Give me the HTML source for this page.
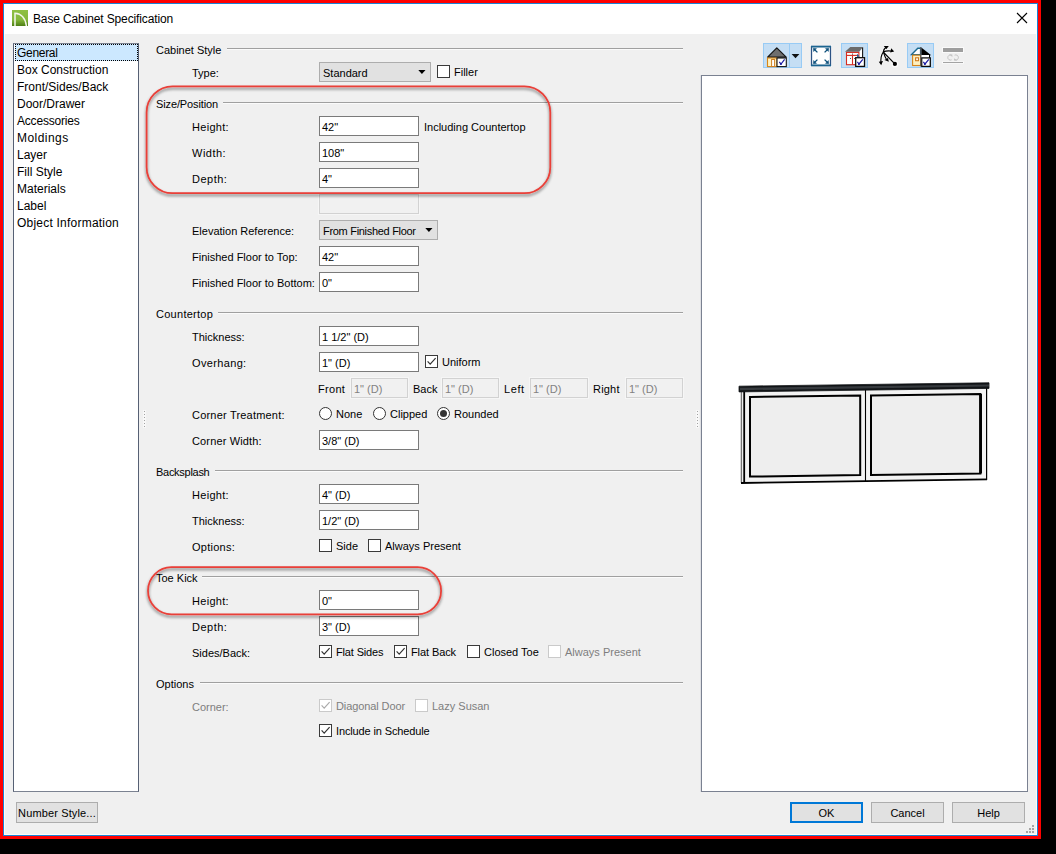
<!DOCTYPE html>
<html lang="en">
<head>
<meta charset="utf-8">
<title>Base Cabinet Specification</title>
<style>
html,body{margin:0;padding:0;}
body{width:1056px;height:854px;background:#000;overflow:hidden;position:relative;
  font-family:"Liberation Sans",sans-serif;font-size:11px;color:#000;}
#red{position:absolute;left:0;top:0;width:1041px;height:839px;background:#fe0000;}
#blue{position:absolute;left:3px;top:3px;width:1035px;height:833px;background:#1883d7;}
#win{position:absolute;left:4px;top:4px;width:1033px;height:831px;background:#fffdf8;}
#title{position:absolute;left:4px;top:4px;width:1033px;height:30px;background:#fff;}
#client{position:absolute;left:5px;top:34px;width:1031px;height:800px;background:#f0f0f0;}
.abs{position:absolute;}
.t{position:absolute;white-space:nowrap;line-height:13px;height:13px;font-size:11px;}
.dis{color:#7e7e7e;}
.ui{font-size:12px;line-height:15px;height:15px;}
.inp{position:absolute;box-sizing:border-box;width:100px;height:20px;border:1px solid #7a7a7a;background:#fff;
  padding:1px 0 0 2px;line-height:19px;font-size:11px;white-space:nowrap;}
.inp.d{border-color:#d2d2d2;background:#f1f1f1;color:#828282;box-shadow:0 0 0 1px #f6f6f6;}
.sel{position:absolute;box-sizing:border-box;height:20px;border:1px solid #adadad;background:#e1e1e1;
  padding:1px 0 0 3px;line-height:19px;font-size:11px;white-space:nowrap;}
.sel svg{position:absolute;right:4px;top:7px;}
.hr{position:absolute;height:1px;background:#a0a0a0;box-shadow:0 1px 0 #fbfbfb;}
.cb{position:absolute;box-sizing:border-box;width:13px;height:13px;border:1px solid #3a3a3a;background:#fff;}
.cb.d{border-color:#cacaca;background:#fff;}
.cb svg{position:absolute;left:0;top:0;}
.rb{position:absolute;box-sizing:border-box;width:13px;height:13px;border:1px solid #333;border-radius:50%;background:#fff;}
.rb.on:after{content:"";position:absolute;left:2px;top:2px;width:7px;height:7px;border-radius:50%;background:#333;}
.btn{position:absolute;box-sizing:border-box;height:21px;border:1px solid #adadad;background:#e1e1e1;text-align:center;
  font-size:11px;line-height:21px;white-space:nowrap;}
.li{position:absolute;left:3px;white-space:nowrap;font-size:12px;line-height:17px;height:17px;}
.callout{position:absolute;box-sizing:border-box;border:2px solid #e8433d;box-shadow:1px 2px 3px rgba(0,0,0,.45);}
</style>
</head>
<body>
<div id="red"></div>
<div id="blue"></div>
<div id="win"></div>
<div id="title">
  <svg class="abs" style="left:8px;top:6px" width="16" height="16" viewBox="0 0 16 16">
    <defs><linearGradient id="g1" x1="0" y1="0" x2="0" y2="1"><stop offset="0" stop-color="#8fc043"/><stop offset=".6" stop-color="#86b83c"/><stop offset="1" stop-color="#4d7f14"/></linearGradient></defs>
    <rect width="16" height="16" fill="url(#g1)"/>
    <path d="M3 16V3.2C9 3.6 13.6 8 14.4 16" fill="none" stroke="#f3f6ea" stroke-width="1.5"/>
  </svg>
  <div class="t ui" style="left:29px;top:8px;letter-spacing:-0.13px">Base Cabinet Specification</div>
  <svg class="abs" style="left:1012px;top:8px" width="12" height="12" viewBox="0 0 12 12"><path d="M1 1L11 11M11 1L1 11" stroke="#000" stroke-width="1.1" fill="none"/></svg>
</div>
<div id="client"></div>

<!-- LIST -->
<div id="list" class="abs" style="left:13px;top:43px;width:126px;height:749px;box-sizing:border-box;border:1px solid #7b8291;border-left-color:#566074;border-right-color:#566074;background:#fff;">
  <div class="abs" style="left:1px;top:0px;width:123px;height:17px;background:#cce8ff;box-sizing:border-box;border:1px dotted #000;"></div>
  <div class="li" style="top:1px;letter-spacing:-0.3px">General</div>
  <div class="li" style="top:18px">Box Construction</div>
  <div class="li" style="top:35px">Front/Sides/Back</div>
  <div class="li" style="top:52px">Door/Drawer</div>
  <div class="li" style="top:69px;letter-spacing:-0.2px">Accessories</div>
  <div class="li" style="top:86px;letter-spacing:0.45px">Moldings</div>
  <div class="li" style="top:103px">Layer</div>
  <div class="li" style="top:120px">Fill Style</div>
  <div class="li" style="top:137px">Materials</div>
  <div class="li" style="top:154px">Label</div>
  <div class="li" style="top:171px;letter-spacing:0.22px">Object Information</div>
</div>
<div class="btn" style="left:16px;top:802px;width:82px;letter-spacing:.13px">Number Style...</div>

<!-- FORM -->
<div id="form">
<div class="t" style="left:156px;top:44px">Cabinet Style</div>
<div class="hr" style="left:227px;top:48px;width:456px"></div>
<div class="t " style="left:192px;top:67px">Type:</div>
<div class="sel" style="left:319px;top:62px;width:112px">Standard<svg width="8" height="5" viewBox="0 0 8 5"><polygon points="0.3,0 7.5,0 3.9,4.1" fill="#000"/></svg></div>
<div class="cb" style="left:437px;top:65px"></div>
<div class="t" style="left:454px;top:66px">Filler</div>
<div class="t" style="left:156px;top:98px;letter-spacing:-0.12px">Size/Position</div>
<div class="hr" style="left:223px;top:102px;width:460px"></div>
<div class="t " style="left:192px;top:121px;letter-spacing:0.3px">Height:</div>
<div class="inp" style="left:319px;top:116px;width:100px">42"</div>
<div class="t" style="left:424px;top:121px">Including Countertop</div>
<div class="t " style="left:192px;top:147px;letter-spacing:0.5px">Width:</div>
<div class="inp" style="left:319px;top:142px;width:100px">108"</div>
<div class="t " style="left:192px;top:173px;letter-spacing:0.5px">Depth:</div>
<div class="inp" style="left:319px;top:168px;width:100px">4"</div>
<div class="inp d" style="left:319px;top:194px;width:100px"></div>
<div class="t " style="left:192px;top:225px">Elevation Reference:</div>
<div class="sel" style="left:319px;top:220px;width:119px"><span style="letter-spacing:-0.3px">From Finished Floor</span><svg width="8" height="5" viewBox="0 0 8 5"><polygon points="0.3,0 7.5,0 3.9,4.1" fill="#000"/></svg></div>
<div class="t " style="left:192px;top:251px">Finished Floor to Top:</div>
<div class="inp" style="left:319px;top:246px;width:100px">42"</div>
<div class="t " style="left:192px;top:277px">Finished Floor to Bottom:</div>
<div class="inp" style="left:319px;top:272px;width:100px">0"</div>
<div class="t" style="left:156px;top:308px;letter-spacing:0.27px">Countertop</div>
<div class="hr" style="left:218px;top:312px;width:465px"></div>
<div class="t " style="left:192px;top:331px">Thickness:</div>
<div class="inp" style="left:319px;top:326px;width:100px">1 1/2" (D)</div>
<div class="t " style="left:192px;top:357px;letter-spacing:0.35px">Overhang:</div>
<div class="inp" style="left:319px;top:352px;width:100px">1" (D)</div>
<div class="cb" style="left:425px;top:355px"><svg width="11" height="11" viewBox="0 0 11 11"><path d="M1.6 5.4L4.2 8.2L9.6 2.2" fill="none" stroke="#333333" stroke-width="1.2"/></svg></div>
<div class="t" style="left:442px;top:356px">Uniform</div>
<div class="t " style="left:318px;top:383px;letter-spacing:0.3px">Front</div>
<div class="inp d" style="left:351px;top:378px;width:57px">1" (D)</div>
<div class="t " style="left:413px;top:383px">Back</div>
<div class="inp d" style="left:442px;top:378px;width:57px">1" (D)</div>
<div class="t " style="left:504px;top:383px;letter-spacing:0.6px">Left</div>
<div class="inp d" style="left:530px;top:378px;width:58px">1" (D)</div>
<div class="t " style="left:593px;top:383px;letter-spacing:0.2px">Right</div>
<div class="inp d" style="left:626px;top:378px;width:57px">1" (D)</div>
<div class="t " style="left:192px;top:409px;letter-spacing:0.2px">Corner Treatment:</div>
<div class="rb" style="left:319px;top:407px"></div>
<div class="t" style="left:336px;top:408px">None</div>
<div class="rb" style="left:373px;top:407px"></div>
<div class="t" style="left:390px;top:408px">Clipped</div>
<div class="rb on" style="left:437px;top:407px"></div>
<div class="t" style="left:454px;top:408px">Rounded</div>
<div class="t " style="left:192px;top:435px;letter-spacing:0.15px">Corner Width:</div>
<div class="inp" style="left:319px;top:430px;width:100px">3/8" (D)</div>
<div class="t" style="left:156px;top:466px;letter-spacing:-0.28px">Backsplash</div>
<div class="hr" style="left:215px;top:470px;width:468px"></div>
<div class="t " style="left:192px;top:489px;letter-spacing:0.3px">Height:</div>
<div class="inp" style="left:319px;top:484px;width:100px">4" (D)</div>
<div class="t " style="left:192px;top:515px">Thickness:</div>
<div class="inp" style="left:319px;top:510px;width:100px">1/2" (D)</div>
<div class="t " style="left:192px;top:541px;letter-spacing:0.25px">Options:</div>
<div class="cb" style="left:319px;top:539px"></div>
<div class="t" style="left:336px;top:540px">Side</div>
<div class="cb" style="left:368px;top:539px"></div>
<div class="t" style="left:385px;top:540px">Always Present</div>
<div class="t" style="left:156px;top:572px">Toe Kick</div>
<div class="hr" style="left:202px;top:576px;width:481px"></div>
<div class="t " style="left:192px;top:595px;letter-spacing:0.3px">Height:</div>
<div class="inp" style="left:319px;top:590px;width:100px">0"</div>
<div class="t " style="left:192px;top:621px;letter-spacing:0.5px">Depth:</div>
<div class="inp" style="left:319px;top:616px;width:100px">3" (D)</div>
<div class="t " style="left:192px;top:647px">Sides/Back:</div>
<div class="cb" style="left:319px;top:645px"><svg width="11" height="11" viewBox="0 0 11 11"><path d="M1.6 5.4L4.2 8.2L9.6 2.2" fill="none" stroke="#333333" stroke-width="1.2"/></svg></div>
<div class="t" style="left:336px;top:646px;letter-spacing:-0.15px">Flat Sides</div>
<div class="cb" style="left:394px;top:645px"><svg width="11" height="11" viewBox="0 0 11 11"><path d="M1.6 5.4L4.2 8.2L9.6 2.2" fill="none" stroke="#333333" stroke-width="1.2"/></svg></div>
<div class="t" style="left:411px;top:646px;letter-spacing:-0.1px">Flat Back</div>
<div class="cb" style="left:467px;top:645px"></div>
<div class="t" style="left:484px;top:646px">Closed Toe</div>
<div class="cb d" style="left:548px;top:645px"></div>
<div class="t dis" style="left:565px;top:646px">Always Present</div>
<div class="t" style="left:156px;top:678px">Options</div>
<div class="hr" style="left:200px;top:682px;width:483px"></div>
<div class="t dis" style="left:192px;top:701px">Corner:</div>
<div class="cb d" style="left:319px;top:699px"><svg width="11" height="11" viewBox="0 0 11 11"><path d="M1.6 5.4L4.2 8.2L9.6 2.2" fill="none" stroke="#ababab" stroke-width="1.2"/></svg></div>
<div class="t dis" style="left:336px;top:700px;letter-spacing:-0.1px">Diagonal Door</div>
<div class="cb d" style="left:415px;top:699px"></div>
<div class="t dis" style="left:432px;top:700px">Lazy Susan</div>
<div class="cb" style="left:319px;top:724px"><svg width="11" height="11" viewBox="0 0 11 11"><path d="M1.6 5.4L4.2 8.2L9.6 2.2" fill="none" stroke="#333333" stroke-width="1.2"/></svg></div>
<div class="t" style="left:336px;top:725px;letter-spacing:-0.13px">Include in Schedule</div>
</div>

<!-- PREVIEW -->
<div id="preview" class="abs" style="left:701px;top:75px;width:327px;height:717px;box-sizing:border-box;border:1px solid #7a8191;background:#fff;box-shadow:-1px 0 0 #dfe0e4;"></div>

<!-- BUTTONS -->
<div class="btn" style="left:790px;top:802px;width:73px;border:2px solid #0078d7;line-height:19px;">OK</div>
<div class="btn" style="left:871px;top:802px;width:73px;">Cancel</div>
<div class="btn" style="left:952px;top:802px;width:73px;">Help</div>
<!-- CALLOUTS -->
<svg class="abs" style="left:130px;top:70px;overflow:visible" width="440" height="140" viewBox="130 70 440 140">
  <defs><filter id="sh" x="-10%" y="-20%" width="120%" height="150%"><feGaussianBlur in="SourceAlpha" stdDeviation="1.6"/><feOffset dx="-0.5" dy="2.2"/><feComponentTransfer><feFuncA type="linear" slope="0.55"/></feComponentTransfer><feMerge><feMergeNode/><feMergeNode in="SourceGraphic"/></feMerge></filter></defs>
  <rect x="146.6" y="86.3" width="403.7" height="106.9" rx="26" ry="26" fill="none" stroke="#e93f38" stroke-width="1.75" filter="url(#sh)"/>
</svg>
<svg class="abs" style="left:130px;top:555px;overflow:visible" width="330" height="75" viewBox="130 555 330 75">
  <rect x="148" y="567.2" width="293.1" height="47.1" rx="23.5" ry="23.5" fill="none" stroke="#e93f38" stroke-width="1.75" filter="url(#sh)"/>
</svg>

<!-- TOOLBAR -->
<svg class="abs" style="left:760px;top:40px" width="210" height="32" viewBox="760 40 210 32">
  <!-- button 1: house w/ dropdown -->
  <rect x="763.5" y="43.5" width="38" height="24" fill="#c5def4" stroke="#98cbf5" stroke-width="1"/>
  <line x1="789.5" y1="44" x2="789.5" y2="67" stroke="#98cbf5" stroke-width="1"/>
  <polygon points="776.8,47.8 767.6,57.2 786.2,57.2" fill="#6e6e6e" stroke="#141414" stroke-width="1.2" stroke-linejoin="round"/>
  <rect x="767.5" y="58" width="9.5" height="8.6" fill="#fff2c2" stroke="#d88616" stroke-width="1.1"/>
  <rect x="771.6" y="59.5" width="3" height="7" fill="#fff" stroke="#cf7f22" stroke-width="1"/>
  <rect x="777" y="58" width="9.3" height="8.6" fill="#fff" stroke="#141414" stroke-width="1.1"/>
  <path d="M779.3 61.8L781 64L784.6 59.4" fill="none" stroke="#1c1ca4" stroke-width="1.2"/>
  <circle cx="780.9" cy="64" r="1" fill="#1c1ca4"/>
  <polygon points="791.6,54 799.4,54 795.5,58.2" fill="#111"/>
  <!-- button 2: fullscreen -->
  <rect x="810" y="45" width="22" height="22" fill="#fbfbfb"/>
  <rect x="811.5" y="46.5" width="19" height="19" fill="#fff" stroke="#2d5384" stroke-width="1.3"/>
  <line x1="811" y1="46.6" x2="831" y2="46.6" stroke="#1c6590" stroke-width="1.7"/>
  <line x1="811" y1="65.4" x2="831" y2="65.4" stroke="#1c6590" stroke-width="1.7"/>
  <g fill="#0d507c" stroke="#0d507c" stroke-width="1.3">
    <path d="M814.2 49.2L817.4 52.4" fill="none"/><polygon points="813.2,48.2 816.6,48.6 813.6,51.6" stroke-width=".4"/>
    <path d="M827.8 49.2L824.6 52.4" fill="none"/><polygon points="828.8,48.2 825.4,48.6 828.4,51.6" stroke-width=".4"/>
    <path d="M814.2 62.8L817.4 59.6" fill="none"/><polygon points="813.2,63.8 816.6,63.4 813.6,60.4" stroke-width=".4"/>
    <path d="M827.8 62.8L824.6 59.6" fill="none"/><polygon points="828.8,63.8 825.4,63.4 828.4,60.4" stroke-width=".4"/>
  </g>
  <!-- button 3: cabinet -->
  <rect x="841.5" y="43.5" width="26" height="24" fill="#c5def4" stroke="#98cbf5" stroke-width="1"/>
  <polygon points="859.2,52 862.9,47.4 862.9,58 859.2,58" fill="#fff"/>
  <line x1="862.6" y1="47.2" x2="862.6" y2="58" stroke="#141414" stroke-width="1.1"/>
  <polygon points="845,51.8 850.3,47.1 863,47.1 859.2,51.8" fill="#6b6b6b"/>
  <rect x="846.5" y="52.4" width="12.4" height="12.3" fill="#fff" stroke="#d62c20" stroke-width="1.1"/>
  <line x1="846.5" y1="55.4" x2="858.5" y2="55.4" stroke="#d62c20" stroke-width="1.1"/>
  <line x1="852.5" y1="55.4" x2="852.5" y2="64.7" stroke="#d62c20" stroke-width="1.1"/>
  <rect x="852" y="53.6" width="1" height="1" fill="#333"/><rect x="850" y="58" width="1" height="1" fill="#555"/><rect x="854" y="58" width="1" height="1" fill="#555"/>
  <polygon points="857,53.8 859.6,56.4 857,57" fill="#1b5e96"/>
  <rect x="855.7" y="57.7" width="8.8" height="8.7" fill="#fff" stroke="#0c0c0c" stroke-width="1.3"/>
  <path d="M857.4 61.9L859 64L862.8 59.4" fill="none" stroke="#1c1ca4" stroke-width="1.2"/>
  <circle cx="858.9" cy="64" r="1" fill="#1c1ca4"/>
  <!-- button 4: arrows -->
  <g stroke="#fdfdfd" stroke-width="2.6" fill="none" stroke-linecap="round" opacity=".9">
    <path d="M883.2 52L894.6 63.6"/><path d="M883.3 52C884 49 885 47.5 886.5 46.6"/><path d="M883.3 52C886 50.6 890 50.8 892.5 51.2"/>
    <path d="M883.3 52C881 55 880.6 59 881 63.5"/><path d="M883.6 52.6C884.4 55.4 885.4 57.8 886.8 60"/>
    <circle cx="894.9" cy="63.9" r="2.2"/>
  </g>
  <g stroke="#000" stroke-width="1.15" fill="none">
    <path d="M883.2 52L894.6 63.6"/>
    <path d="M883.3 52C883.8 49.4 885 47.8 886.6 46.8"/>
    <path d="M883.3 52C886 50.6 890 50.8 892.5 51.2"/>
    <path d="M883.3 52C881 55 880.6 59 881 63.5"/>
    <path d="M883.6 52.6C884.4 55.4 885.4 57.8 886.8 60"/>
  </g>
  <g fill="#000">
    <circle cx="894.9" cy="63.9" r="2.1"/>
    <polygon points="883.8,46 888.8,46 886.3,49.3"/>
    <polygon points="891.2,48.2 894.2,51.5 890.2,52.6"/>
    <polygon points="878.8,61.8 883,61 881.2,65.2"/>
    <polygon points="884.4,60 888,58 888.8,61.8"/>
  </g>
  <!-- button 5: split house -->
  <rect x="907.5" y="43.5" width="26" height="24" fill="#c5def4" stroke="#98cbf5" stroke-width="1"/>
  <polygon points="911.6,54.6 917.8,48.3 920.6,48.3 920.6,54.6" fill="#fff" stroke="#1b6a90" stroke-width="1.4"/>
  <rect x="912.6" y="55.2" width="8" height="10.3" fill="#fdf0c0" stroke="#d6851a" stroke-width="1.1"/>
  <rect x="915.6" y="57.8" width="2.9" height="2.9" fill="#fff" stroke="#d07a1c" stroke-width="1.1"/>
  <polygon points="921.3,47.4 931.2,55.2 921.3,55.2" fill="#000"/>
  <rect x="921.3" y="55" width="8.2" height="3" fill="#fff"/>
  <line x1="929.5" y1="54.8" x2="929.5" y2="58" stroke="#000" stroke-width="1"/>
  <rect x="921.7" y="57.9" width="8.6" height="8.5" fill="#fff" stroke="#0c0c0c" stroke-width="1.3"/>
  <line x1="920.8" y1="47" x2="920.8" y2="66.6" stroke="#505054" stroke-width="1.2"/>
  <path d="M923.3 61.9L925 64L928.8 59.4" fill="none" stroke="#1c1ca4" stroke-width="1.2"/>
  <circle cx="924.9" cy="64" r="1" fill="#1c1ca4"/>
  <!-- button 6: disabled -->
  <rect x="942" y="47" width="22" height="6" fill="#fafafa"/>
  <rect x="943" y="48" width="20" height="4" fill="#9e9e9e"/>
  <rect x="942" y="61.4" width="22" height="2.4" fill="#fafafa"/>
  <rect x="943" y="62" width="20" height="1" fill="#a3a3a3"/>
  <g fill="none" stroke="#c4c4c4" stroke-width="1">
    <path d="M951.6 59.8A2.6 2.6 0 1 1 951.6 55.2"/><path d="M954.6 55.2A2.6 2.6 0 1 1 954.6 59.8"/>
  </g>
  <polygon points="949,54.4 952.4,54.4 952.4,57" fill="#c4c4c4"/><polygon points="954,58.2 957.4,60.6 954,60.6" fill="#c4c4c4"/>
</svg>

<!-- CABINET PREVIEW -->
<svg class="abs" style="left:730px;top:370px" width="270" height="130" viewBox="730 370 270 130">
  <!-- body -->
  <polygon points="741,391 987,387.5 987,479.6 741,483.2" fill="#f3f3f3"/>
  <!-- left side face -->
  <polygon points="740.6,391.5 744,391.5 744,483 740.6,482.6" fill="#ededed"/>
  <line x1="741.3" y1="391" x2="741.3" y2="482.8" stroke="#4a4a4a" stroke-width="0.9"/>
  <line x1="744.2" y1="391" x2="744.2" y2="483" stroke="#000" stroke-width="1.8"/>
  <!-- bottom -->
  <line x1="741" y1="483" x2="987" y2="479.4" stroke="#000" stroke-width="1.8"/>
  <!-- right -->
  <line x1="986.6" y1="387" x2="986.6" y2="480" stroke="#000" stroke-width="1.2"/>
  <!-- divider -->
  <line x1="865.5" y1="389" x2="865.5" y2="481.4" stroke="#000" stroke-width="1.1"/>
  <!-- left door panel -->
  <polygon points="750,397 860.2,395.6 860.2,475 750,476.6" fill="#eeeeee" stroke="#000" stroke-width="2"/>
  <!-- right door panel -->
  <polygon points="871,395.4 980.4,394 980.4,473.4 871,475" fill="#eeeeee" stroke="#000" stroke-width="2"/>
  <line x1="980.6" y1="394" x2="980.6" y2="473.4" stroke="#000" stroke-width="2.8"/>
  <!-- countertop -->
  <polygon points="739,386.2 989,382.8 989,388.4 739,391.9" fill="#111417" stroke="#111417" stroke-width="0.8" stroke-linejoin="round"/>
  <polygon points="740,387.8 989,384.4 989,386.6 740,390.2" fill="#363a3e"/>
</svg>

<!-- SPLITTER GRIPS + SIZE GRIP -->
<div class="abs" style="left:143px;top:410px;width:3px;height:3px;background:#f8f8f8"></div><div class="abs" style="left:144px;top:411px;width:1px;height:1px;background:#a2a2a2"></div><div class="abs" style="left:143px;top:413px;width:3px;height:3px;background:#f8f8f8"></div><div class="abs" style="left:144px;top:414px;width:1px;height:1px;background:#a2a2a2"></div><div class="abs" style="left:143px;top:416px;width:3px;height:3px;background:#f8f8f8"></div><div class="abs" style="left:144px;top:417px;width:1px;height:1px;background:#a2a2a2"></div><div class="abs" style="left:143px;top:419px;width:3px;height:3px;background:#f8f8f8"></div><div class="abs" style="left:144px;top:420px;width:1px;height:1px;background:#a2a2a2"></div><div class="abs" style="left:143px;top:422px;width:3px;height:3px;background:#f8f8f8"></div><div class="abs" style="left:144px;top:423px;width:1px;height:1px;background:#a2a2a2"></div><div class="abs" style="left:143px;top:425px;width:3px;height:3px;background:#f8f8f8"></div><div class="abs" style="left:144px;top:426px;width:1px;height:1px;background:#a2a2a2"></div>
<div class="abs" style="left:696px;top:410px;width:3px;height:3px;background:#f8f8f8"></div><div class="abs" style="left:697px;top:411px;width:1px;height:1px;background:#a2a2a2"></div><div class="abs" style="left:696px;top:413px;width:3px;height:3px;background:#f8f8f8"></div><div class="abs" style="left:697px;top:414px;width:1px;height:1px;background:#a2a2a2"></div><div class="abs" style="left:696px;top:416px;width:3px;height:3px;background:#f8f8f8"></div><div class="abs" style="left:697px;top:417px;width:1px;height:1px;background:#a2a2a2"></div><div class="abs" style="left:696px;top:419px;width:3px;height:3px;background:#f8f8f8"></div><div class="abs" style="left:697px;top:420px;width:1px;height:1px;background:#a2a2a2"></div><div class="abs" style="left:696px;top:422px;width:3px;height:3px;background:#f8f8f8"></div><div class="abs" style="left:697px;top:423px;width:1px;height:1px;background:#a2a2a2"></div><div class="abs" style="left:696px;top:425px;width:3px;height:3px;background:#f8f8f8"></div><div class="abs" style="left:697px;top:426px;width:1px;height:1px;background:#a2a2a2"></div>
<svg class="abs" style="left:1025px;top:824px" width="11" height="11" viewBox="1025 824 11 11" shape-rendering="crispEdges">
  <g fill="#a3a3a3"><rect x="1032" y="825" width="2" height="2"/><rect x="1029" y="828" width="2" height="2"/><rect x="1032" y="828" width="2" height="2"/><rect x="1026" y="831" width="2" height="2"/><rect x="1029" y="831" width="2" height="2"/><rect x="1032" y="831" width="2" height="2"/></g>
</svg>


</body>
</html>
